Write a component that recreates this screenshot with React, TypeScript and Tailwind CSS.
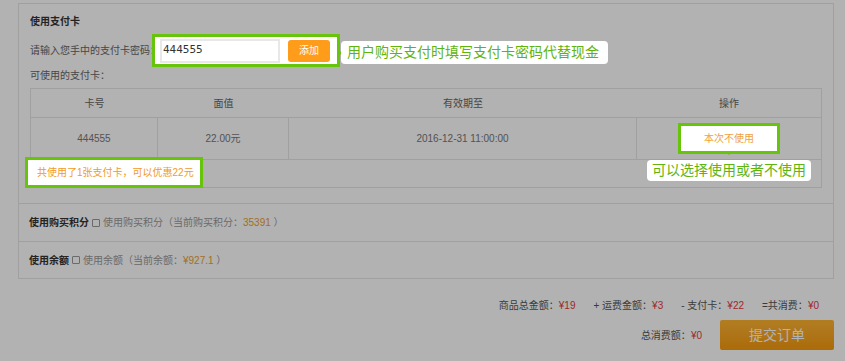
import React from "react";

const green = "border-[#66c40a]";

const Checkbox = () => (
  <span className="inline-block w-[8px] h-[8px] border border-[#999] bg-white rounded-[1px] mx-[3px]" />
);

const App = () => {
  return (
    <div className="relative w-[845px] h-[361px] bg-white overflow-hidden font-['Liberation_Sans','Noto_Sans_CJK_SC',sans-serif] text-[10px] text-[#666]">
      {/* dim overlay */}
      <div className="absolute inset-0 bg-black/30 z-10" />

      <div className="ml-[18px] mt-[3px] w-[816px] border border-[#e6e6e6]">
        <div className="px-[11px] pb-[15px]">
          <h3 className="pt-[7px] mb-[1px] leading-[22px] font-bold text-[#333]">使用支付卡</h3>

          <div className="flex items-center h-[33px]">
            <span className="w-[122px] whitespace-nowrap">请输入您手中的支付卡密码：</span>
            <div className={`relative z-20 flex items-center h-[33px] w-[188px] border-[3px] ${green} bg-white pl-[5px]`}>
              <div className="w-[120px] h-[24px] border-2 border-[#e8e8e8] flex items-center pl-[1px] text-[11px] text-[#333] font-['DejaVu_Sans_Mono',monospace]">
                444555
              </div>
              <button className="ml-[8px] w-[42px] h-[22px] rounded-[3px] bg-[#ff9c1a] text-white text-[10px]">添加</button>
              <div className="absolute left-full top-[4px] flex items-center">
                <span className="w-0 h-0 border-y-[5px] border-y-transparent border-l-[5px] border-l-[#66c40a]" />
                <div className="ml-[-1px] w-[267px] h-[23px] rounded-[4px] bg-white flex items-center pl-[6px] text-[14px] text-[#5fb40e] whitespace-nowrap">
                  用户购买支付时填写支付卡密码代替现金
                </div>
              </div>
            </div>
          </div>

          <p className="leading-[16px] mb-[4px] mt-[1px]">可使用的支付卡：</p>

          <div className="border border-[#e6e6e6] w-[792px]">
            <div className="grid grid-cols-[127px_131px_348px_1fr] h-[28px] items-center text-center">
              <span>卡号</span>
              <span>面值</span>
              <span>有效期至</span>
              <span>操作</span>
            </div>
            <div className="grid grid-cols-[127px_131px_348px_1fr] h-[42px] border-t border-[#e6e6e6] text-center text-[#777]">
              <div className="flex items-center justify-center border-r border-[#e6e6e6]">444555</div>
              <div className="flex items-center justify-center border-r border-[#e6e6e6]">22.00元</div>
              <div className="flex items-center justify-center border-r border-[#e6e6e6]">2016-12-31 11:00:00</div>
              <div className="flex items-center justify-center">
                <div className={`relative z-20 w-[102px] h-[31px] border-[3px] ${green} bg-white flex items-center justify-center text-[#f0a040]`}>
                  本次不使用
                  <span className="absolute top-full left-1/2 -translate-x-1/2 w-0 h-0 border-x-[4px] border-x-transparent border-t-[4px] border-t-[#66c40a]" />
                  <div className="absolute top-[34px] left-1/2 -translate-x-1/2 w-[164px] h-[21px] rounded-[4px] bg-white flex items-center justify-center text-[14px] text-[#5fb40e] whitespace-nowrap">
                    可以选择使用或者不使用
                  </div>
                </div>
              </div>
            </div>
            <div className="relative h-[28px] border-t border-[#e6e6e6]">
              <div className={`absolute left-[-6px] top-[-3px] z-20 w-[178px] h-[31px] border-[3px] ${green} bg-white flex items-center pl-[9px] text-[#f09a2a] whitespace-nowrap`}>
                共使用了1张支付卡，可以优惠22元
              </div>
            </div>
          </div>
        </div>

        <div className="flex items-center h-[38px] border-t border-[#e6e6e6] px-[10px]">
          <span className="font-bold text-[#333]">使用购买积分</span>
          <Checkbox />
          <span className="text-[#999]">
            使用购买积分（当前购买积分：<span className="text-[#e8a030]">35391</span> ）
          </span>
        </div>
        <div className="flex items-center h-[37px] border-t border-[#e6e6e6] px-[10px]">
          <span className="font-bold text-[#333]">使用余额</span>
          <Checkbox />
          <span className="text-[#999]">
            使用余额（当前余额：<span className="text-[#e8a030]">¥927.1</span> ）
          </span>
        </div>
      </div>

      <div className="ml-[18px] w-[816px] mt-[16px]">
        <div className="flex justify-end items-center h-[20px] pr-[15px] gap-[18px] text-[#555]">
          <span>商品总金额：<span className="text-[#e4393c]">¥19</span></span>
          <span>+ 运费金额：<span className="text-[#e4393c]">¥3</span></span>
          <span>- 支付卡：<span className="text-[#e4393c]">¥22</span></span>
          <span>=共消费：<span className="text-[#e4393c]">¥0</span></span>
        </div>
        <div className="flex justify-end items-center mt-[5px] gap-[18px] text-[#555]">
          <span>总消费额：<span className="text-[#e4393c]">¥0</span></span>
          <button className="w-[114px] h-[30px] rounded-[2px] bg-gradient-to-b from-[#ffb431] to-[#f59a0c] text-white text-[14px]">
            提交订单
          </button>
        </div>
      </div>
    </div>
  );
};

export default App;
